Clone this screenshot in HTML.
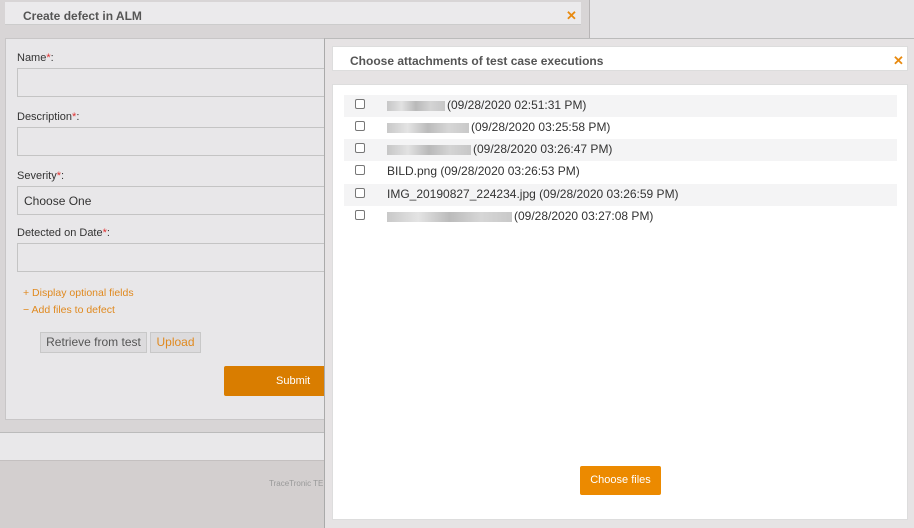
<!DOCTYPE html>
<html><head><style>
*{margin:0;padding:0;box-sizing:border-box}
body{width:914px;height:528px;overflow:hidden;background:#e6e5e7;font-family:"Liberation Sans",sans-serif;position:relative;font-size:12px}
.a{position:absolute}
.lbl{position:absolute;left:17px;font-size:11px;color:#333}
.lbl b{color:#e03030;font-weight:normal}
.inp{position:absolute;left:17px;width:320px;height:29px;background:#e8e7e9;border:1px solid #c4c4c4}
.row{position:absolute;left:344px;width:553px;height:22px}
.row.s{background:#f4f4f5}
.cb{position:absolute;left:11px;top:4px;width:10px;height:10px;border:1px solid #777;border-radius:2px;background:#fff}
.tx{position:absolute;left:43px;top:3px;font-size:12px;color:#333;white-space:nowrap}
.blur{display:inline-block;height:10px;background:linear-gradient(90deg,#bbb,#ddd,#aaa,#ccc,#bbb);vertical-align:middle;opacity:.8;margin-right:2px}
.x{position:absolute;font-size:13px;font-weight:bold;color:#e88a10;line-height:13px}
</style></head><body>
<div class="a" style="left:0;top:0;width:590px;height:432px;background:#d8d5d6;border-right:1px solid #b8b5b6"></div>
<div class="a" style="left:5px;top:2px;width:576px;height:23px;background:#ebeaec;border-bottom:1px solid #ccc"></div>
<div class="a" style="left:23px;top:9px;font-size:12px;font-weight:bold;color:#555">Create defect in ALM</div>
<div class="x" style="left:566px;top:9px">✕</div>
<div class="a" style="left:5px;top:38px;width:330px;height:382px;background:#e8e7e9;border:1px solid #c8c6c7"></div>
<div class="lbl" style="top:52px">Name<b>*</b>:</div>
<div class="inp" style="top:68px"></div>
<div class="lbl" style="top:111px">Description<b>*</b>:</div>
<div class="inp" style="top:127px"></div>
<div class="lbl" style="top:170px">Severity<b>*</b>:</div>
<div class="inp" style="top:186px"></div>
<div class="a" style="left:24px;top:194px;font-size:12px;color:#333">Choose One</div>
<div class="lbl" style="top:227px">Detected on Date<b>*</b>:</div>
<div class="inp" style="top:243px"></div>
<div class="a" style="left:23px;top:287px;font-size:10.5px;color:#e08a20">+ Display optional fields</div>
<div class="a" style="left:23px;top:304px;font-size:10.5px;color:#e08a20">− Add files to defect</div>
<div class="a" style="left:40px;top:332px;width:107px;height:21px;background:#dcdbdd;border:1px solid #c8c8c8;font-size:12px;color:#555;text-align:center;line-height:19px">Retrieve from test</div>
<div class="a" style="left:150px;top:332px;width:51px;height:21px;background:#dcdbdd;border:1px solid #c8c8c8;font-size:12px;color:#e08a20;text-align:center;line-height:19px">Upload</div>
<div class="a" style="left:224px;top:366px;width:110px;height:30px;background:#d97d00;border-radius:2px"></div>
<div class="a" style="left:276px;top:375px;font-size:11px;color:#fff">Submit</div>
<div class="a" style="left:0;top:432px;width:330px;height:28px;background:#e9e8ea;border-top:1px solid #bbb"></div>
<div class="a" style="left:0;top:460px;width:330px;height:68px;background:#d3cfcf;border-top:1px solid #c4c0c0"></div>
<div class="a" style="left:269px;top:479px;font-size:8px;color:#999">TraceTronic TE</div>
<div class="a" style="left:324px;top:38px;width:590px;height:490px;background:#e6e3e4;border-left:1px solid #aaa;border-top:1px solid #bbb"></div>
<div class="a" style="left:332px;top:46px;width:576px;height:25px;background:#fff;border:1px solid #ddd"></div>
<div class="a" style="left:350px;top:54px;font-size:12px;font-weight:bold;color:#555">Choose attachments of test case executions</div>
<div class="x" style="left:893px;top:54px">✕</div>
<div class="a" style="left:332px;top:84px;width:576px;height:436px;background:#fff;border:1px solid #ddd"></div>
<div class="row s" style="top:95px"><div class="cb"></div><div class="tx"><span class="blur" style="width:58px"></span>(09/28/2020 02:51:31 PM)</div></div>
<div class="row" style="top:117px"><div class="cb"></div><div class="tx"><span class="blur" style="width:82px"></span>(09/28/2020 03:25:58 PM)</div></div>
<div class="row s" style="top:139px"><div class="cb"></div><div class="tx"><span class="blur" style="width:84px"></span>(09/28/2020 03:26:47 PM)</div></div>
<div class="row" style="top:161px"><div class="cb"></div><div class="tx">BILD.png (09/28/2020 03:26:53 PM)</div></div>
<div class="row s" style="top:184px"><div class="cb"></div><div class="tx">IMG_20190827_224234.jpg (09/28/2020 03:26:59 PM)</div></div>
<div class="row" style="top:206px"><div class="cb"></div><div class="tx"><span class="blur" style="width:125px"></span>(09/28/2020 03:27:08 PM)</div></div>
<div class="a" style="left:580px;top:466px;width:81px;height:29px;background:#ec8a00;border-radius:2px;color:#fff;font-size:11px;text-align:center;line-height:29px">Choose files</div>
</body></html>
